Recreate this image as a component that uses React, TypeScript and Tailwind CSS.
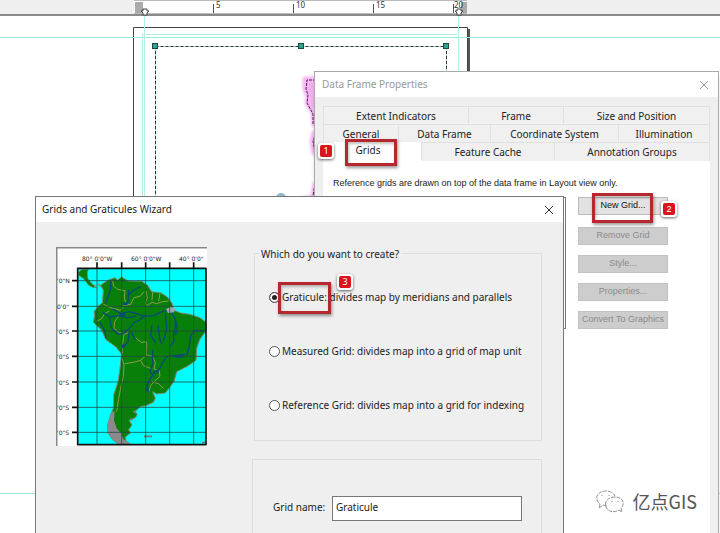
import React from 'react';

const ui = "font-['Noto_Sans','Noto_Sans_CJK_SC',sans-serif]";
const arial = "font-['Liberation_Sans',sans-serif]";

function Badge({ n, className }: { n: number; className: string }) {
  return (
    <span className={`absolute z-10 flex size-4 items-center justify-center rounded-[3px] bg-white shadow-[0_1px_3px_rgba(0,0,0,0.6)] ${className}`}>
      <span className="flex size-3 items-center justify-center rounded-xs bg-[#d8141c] text-[9px] leading-3 text-white">{n}</span>
    </span>
  );
}

function Highlight({ className }: { className: string }) {
  return <span className={`pointer-events-none absolute border-[3px] border-[#b5282e] shadow-[1px_2px_3px_rgba(0,0,0,0.4),inset_1px_2px_3px_rgba(0,0,0,0.25)] ${className}`} />;
}

function Ruler() {
  return (
    <header className="relative z-10 flex h-4 border-b-2 border-[#8a8a8a] bg-[#efefef]">
      <svg aria-label="Ruler" className="h-4 w-[480px] shrink-0" viewBox="0 0 480 16">
        <rect x="134" y="1" width="333" height="13" fill="#fff" />
        <path d="M134 .5H467" stroke="#bbb" />
        <path d="M134 13.5H467" stroke="#bbb" />
        <rect x="135" y="2" width="8" height="11" fill="#aaa" />
        <rect x="461" y="2" width="6" height="11" fill="#aaa" />
        <path d="M213.500 4V13M293.500 4V13M373.500 4V13M453.500 4V13" stroke="#555" />
        <g className="font-['Noto_Sans',sans-serif]" fontSize="8" fill="#333">
          <text x="216" y="8">5</text>
          <text x="296" y="8">10</text>
          <text x="376" y="8">15</text>
          <text x="454" y="8">20</text>
        </g>
        <g fill="#fff" stroke="#444">
          <path d="M143 9h4v2h2l-2 2v2h-4v-2l-2-2h2z" />
          <path d="M457 9h4v2h2l-2 2v2h-4v-2l-2-2h2z" />
        </g>
      </svg>
    </header>
  );
}

function LayoutDrawing() {
  return (
    <svg className="absolute top-0 left-0 h-[533px] w-full" aria-hidden="true">
      <g fill="none">
        <path d="M133.500 533V27.500H467.500V533" stroke="#444" />
        <path d="M469 29V533" stroke="#555" strokeWidth="2" />
        <g fill="#96ece0">
          <rect x="0" y="37" width="100%" height="1" />
          <rect x="0" y="493" width="100%" height="1" />
        </g>
        <path d="M143 34.500H457M142.500 34V533M144.500 16V533M458.500 16V533" stroke="#b4eee6" />
        <path d="M155.500 46.500H447M155.500 46V533M446.500 46V533" stroke="#a5dcd2" />
        <path d="M155.500 46.500H447M155.500 46V533M446.500 46V533" stroke="#333" strokeDasharray="3 2" />
      </g>
      <g fill="#2fa58e" stroke="#174b44">
        <rect x="152.500" y="43.500" width="5" height="5" />
        <rect x="298.500" y="43.500" width="5" height="5" />
        <rect x="443.500" y="43.500" width="5" height="5" />
      </g>
      <g className="blur-[1px]" fill="#f3b2ee" stroke="#f6b8f2" strokeWidth="5" strokeLinejoin="round">
        <path d="M305 79h20v46h-11l-1-13-6-9 1-6-3-8zM314 133l-2 8 2 12h9v-20zM315 184l-2 12h9v-12zM304 199l9-2 4 3z" />
      </g>
      <path d="M316 80h-9l-1 9 2 6-1 8 6 11v10M316 133l-3 8 2 12M315 184l-2 12" fill="none" stroke="#4a2458" strokeDasharray="3 1" />
      <circle cx="281" cy="198" r="5" fill="#8fb9c8" />
    </svg>
  );
}

function TabRow({ cols, children }: { cols: string; children: React.ReactNode }) {
  return <div className={`grid ${cols} border-r border-[#e0e0e0]`}>{children}</div>;
}

function Tab({ name, selected }: { name: string; selected?: boolean }) {
  return (
    <button
      type="button"
      role="tab"
      aria-selected={!!selected}
      className={
        selected
          ? 'relative flex h-[19px] items-center justify-center bg-white pr-2 pb-1 text-[#222]'
          : 'flex h-[18px] items-center justify-center border-t border-l border-[#e0e0e0] bg-[#f0f0f0] text-[#222]'
      }
    >
      {name}
      {selected && <Highlight className="-top-[3px] left-[22px] h-[27px] w-[52px]" />}
    </button>
  );
}

function PropertiesDialog() {
  const disabled = ['Remove Grid', 'Style...', 'Properties...', 'Convert To Graphics'];
  return (
    <section aria-label="Data Frame Properties" className="absolute top-[71px] -bottom-1 left-[314px] flex w-[405px] flex-col border border-[#aaa] bg-[#efefef] shadow-md">
      <div className="flex h-[25px] shrink-0 items-center justify-between bg-white pr-2 pl-[7px] text-[10px] text-[#999]">
        <h2>Data Frame Properties</h2>
        <button type="button" aria-label="Close properties">
          <svg className="size-3" viewBox="0 0 12 12" stroke="#999"><path d="M2 2l8 8M10 2l-8 8" /></svg>
        </button>
      </div>
      <div role="tablist" className="mx-2 mt-[9px] text-[10px] leading-4">
        <TabRow cols="grid-cols-[145fr_95fr_146fr]"><Tab name="Extent Indicators" /><Tab name="Frame" /><Tab name="Size and Position" /></TabRow>
        <TabRow cols="grid-cols-[75fr_92fr_128fr_91fr]"><Tab name="General" /><Tab name="Data Frame" /><Tab name="Coordinate System" /><Tab name="Illumination" /></TabRow>
        <TabRow cols="grid-cols-[98fr_133fr_155fr]"><Tab name="Grids" selected /><Tab name="Feature Cache" /><Tab name="Annotation Groups" /></TabRow>
      </div>
      <div className={`mx-2 flex grow flex-col bg-white pt-4 ${arial}`}>
        <p className="pl-[10px] text-[9px] leading-3 whitespace-nowrap text-[#222]">Reference grids are drawn on top of the data frame in Layout view only.</p>
        <div className="mt-2 flex justify-between pr-[42px] pl-[10px]">
          <div className="h-[132px] w-[233px] border border-[#777] bg-white" />
          <div className="flex w-[90px] flex-col gap-[10px] text-[9px]">
            <div className="relative mb-[2px]">
              <button type="button" className="h-[18px] w-full border border-[#bbb] bg-[#e2e2e2] text-[#111]">New Grid...</button>
              <Highlight className="-top-1 left-[14px] h-[30px] w-[61px]" />
              <Badge n={2} className="top-1 left-[83px]" />
            </div>
            {disabled.map((name) => (
              <button key={name} type="button" disabled className="h-[18px] w-full border border-[#c2c2c2] bg-[#cdcdcd] whitespace-nowrap text-[#8b8b8b]">{name}</button>
            ))}
          </div>
        </div>
      </div>
      <Badge n={1} className="top-[71px] left-[3px]" />
    </section>
  );
}

/* Land and rivers are drawn on a grid three times finer than the frame. */
function SouthAmerica() {
  return (
    <svg aria-label="Graticule preview" className="h-[199px] w-[151px] shrink-0" viewBox="56 247 151 199">
      <rect x="56" y="247" width="151" height="199" fill="#fff" />
      <path d="M56.500 446V247.500H207" fill="none" stroke="#888" strokeWidth="2" />
      <rect x="78" y="268" width="128" height="176" fill="#00ffff" />
      <g transform="translate(40 235) scale(.33333)" strokeLinejoin="round">
        <path d="M116 112l8-8 21-1-3 10 1 17 11 14 11 10-4 5-16-9-14-19-15-10z" fill="#087f08" stroke="#7d8a70" strokeWidth="2" />
        <path d="M162 150l8 10M174 147l14 12" stroke="#7d8a70" strokeWidth="4" />
        <path d="M205 135L225 128L232 135L245 126L265 138L305 139L322 150L335 170L362 173L382 186L396 205L402 226L422 234L450 238L480 248L498 262V288L480 312L470 340L468 376L442 394L410 410L402 440L376 474L350 477L338 470L346 490L340 502L318 512L300 515L292 524L280 530L292 538L286 548L268 556L276 570L266 584L272 594L256 606L258 618L272 628H236L218 614L204 594L203 568L212 540L220 520L221 480L234 440L240 400L245 358L228 336L198 314L184 284L160 262L164 240L162 230L176 212L187 204L190 166L182 150z" fill="#087f08" stroke="#7d8a70" strokeWidth="3" />
        <path d="M203 568L212 535L224 528L222 556L230 580L244 596L250 612L272 628H236L218 614L204 594z" fill="#8a8a8a" />
        <g fill="none" stroke="#8c9c50" strokeWidth="3">
          <path d="M218 137l3 16 12 10 22 4-2 22 6 20M250 212l22-4 10-20 18-4 12-14M318 168l4 20-6 16 6 8 14-10 14 4 18-6 18-2M338 172l-2 24M360 174l-4 24M170 258l14-6 10-16 14-8M190 208l22 10 28 8 10-8M238 240l-14 20-2 20 12 10 20 8 12-6M252 298l-4 28-2 32M246 370l6 18-2 36-8 36-6 30-6 40M254 386l26-4 22-6 18-16 18 4 8 20-4 18 16 6 2 16-16 14-12 14-6 20M302 376l8 16 26 10M336 440l20 6 14 14M286 308l18 14 16-2-2 44" />
        </g>
        <g fill="none" stroke="#064a7a" strokeWidth="4">
          <path d="M212 140v22l-6 18-10 26M266 164l-2 38-12 8M264 182l16-16 22-12M218 222l24 14 24-6 24 6 22 8 28-2 20-10 22-6M188 232l20 14 30-4 24 6 26-4M180 262l14 24 4 24M208 248l6 30 20 20 14-2 20-16 14-18 16-6 16-16M248 340l16-20 4-32M286 314l-12-22M336 270l-4 32 16 22M354 272l6 42 6 14M376 234l4 50-10 34M406 248v30l-6 24 2 18-12 14M392 228l14 26 6 26-6 22M440 362l8-28 4-34 18-14 22 2M386 364l50-6M384 362l-14 16-10 22-20 16-16 26-6 26M338 344v42l-8 24 12 16M320 450l6 22" />
          <path d="M240 242l16-4M246 336l8-8M406 364h24M342 412l14-4M250 206h12" strokeWidth="8" />
        </g>
        <path d="M378 222l14-6 14 4-4 12-18 2z" fill="#9aabb0" />
        <path d="M284 527l4 8M270 552l8 2M312 604h24M486 623h10" stroke="#777" strokeWidth="5" />
        <path d="M171 100V629M245 100V629M317 100V629M389 100V629M461 100V629M113 137H498M113 214H498M113 288H498M113 364H498M113 441H498M113 517H498M113 592H498" fill="none" stroke="#264848" strokeOpacity=".8" strokeWidth="3" />
        <path d="M498 100H113V629H498zM96 137h17M96 214h17M96 288h17M96 364h17M96 441h17M96 517h17M96 592h17M171 82v18M245 82v18M317 82v18M389 82v18M461 82v18" fill="none" stroke="#111" strokeWidth="5" />
      </g>
      <g fill="#222" fontSize="6" className="font-['DejaVu_Sans',sans-serif]">
        <text x="82" y="261">80° 0'0"W</text><text x="131" y="261">60° 0'0"W</text><text x="179" y="261">40° 0'0"</text>
        <text x="57" y="283">'0"N</text><text x="57" y="309">0'0"</text><text x="57" y="334">'0"S</text><text x="57" y="359">'0"S</text><text x="57" y="385">'0"S</text><text x="57" y="410">'0"S</text><text x="57" y="435">'0"S</text>
      </g>
    </svg>
  );
}

function GridOption({ label, checked }: { label: string; checked?: boolean }) {
  return (
    <label className="relative flex h-4 items-center gap-[2px] whitespace-nowrap">
      <input type="radio" name="grid-type" defaultChecked={checked} className="size-[11px] shrink-0 appearance-none rounded-full border border-[#555] bg-white checked:bg-[#222] checked:shadow-[inset_0_0_0_2px_white]" />
      <span>{label}</span>
      {checked && <Highlight className="-top-[7px] left-[9px] h-8 w-[53px]" />}
      {checked && <Badge n={3} className="-top-[15px] left-[68px]" />}
    </label>
  );
}

function WizardDialog() {
  return (
    <section aria-label="Grids and Graticules Wizard" className="absolute top-[196px] -bottom-1 left-[35px] flex w-[529px] flex-col border border-[#777] bg-[#efefef] text-[10px] text-[#222]">
      <div className="flex h-[25px] shrink-0 items-center justify-between bg-white pr-2 pl-[6px]">
        <h1>Grids and Graticules Wizard</h1>
        <button type="button" aria-label="Close wizard">
          <svg className="size-3" viewBox="0 0 12 12" stroke="#333"><path d="M2 2l8 8M10 2l-8 8" /></svg>
        </button>
      </div>
      <div className="flex grow items-start gap-[45px] pt-[25px] pr-[21px] pl-5">
        <SouthAmerica />
        <div className="flex min-w-0 grow flex-col pt-[6px]">
          <fieldset className="relative ml-[2px] h-[188px] min-w-0 border border-[#ddd] pt-[35px] pr-[9px] pl-[14px]">
            <legend className="absolute -top-2 left-1 bg-[#efefef] px-[2px] leading-4">Which do you want to create?</legend>
            <div className="flex flex-col gap-[38px]">
              <GridOption label="Graticule: divides map by meridians and parallels" checked />
              <GridOption label="Measured Grid: divides map into a grid of map unit" />
              <GridOption label="Reference Grid: divides map into a grid for indexing" />
            </div>
          </fieldset>
          <div className="mt-[18px] flex h-24 items-start border border-[#ddd] pt-9 pl-5">
            <label htmlFor="grid-name" className="w-[59px] shrink-0 pt-1">Grid name:</label>
            <input id="grid-name" defaultValue="Graticule" className="h-[25px] w-[190px] border border-[#777] bg-white px-[3px] pb-1" />
          </div>
        </div>
      </div>
    </section>
  );
}

function Watermark() {
  return (
    <div className="absolute right-[23px] bottom-5 flex items-center gap-2 text-[#555]">
      <svg className="h-6 w-[30px]" viewBox="0 0 30 24" fill="none" stroke="#777" strokeWidth=".8">
        <path strokeDasharray="4 1" d="M12 17l-4-1-4 3 1-4C-2 9 3 2 11 2c5 0 9 3 9 6M20 8c-7 0-11 5-9 10 2 5 8 6 13 3l3 2-1-4c5-5 1-11-6-11z" />
        <path d="M7 6v1M14 6v1M17 12v1M23 12v1" />
      </svg>
      <span className="font-['Noto_Sans_CJK_SC',sans-serif] text-[18px] leading-6">亿点GIS</span>
    </div>
  );
}

export default function App() {
  return (
    <main className={`relative flex h-screen min-h-[533px] flex-col overflow-hidden bg-white ${ui}`}>
      <Ruler />
      <LayoutDrawing />
      <PropertiesDialog />
      <WizardDialog />
      <Watermark />
    </main>
  );
}
